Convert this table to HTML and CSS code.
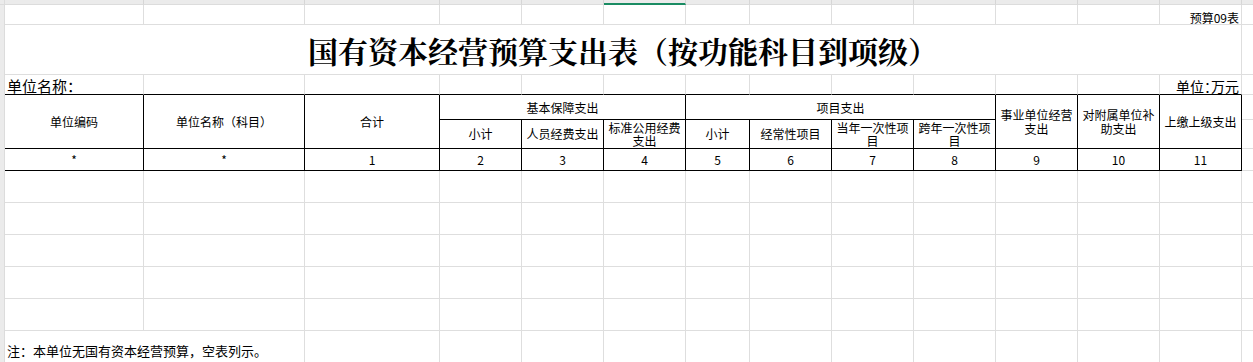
FILE: index.html
```html
<!DOCTYPE html>
<html lang="zh-CN">
<head>
<meta charset="utf-8">
<title>国有资本经营预算支出表</title>
<link rel="stylesheet" href="styles.css">
</head>
<body>
<div class="sheet">
  <div class="colhead">
    <div class="ch corner"></div>
    <div class="ch w139"></div>
    <div class="ch w161"></div>
    <div class="ch w135"></div>
    <div class="ch w82"></div>
    <div class="ch w82"></div>
    <div class="ch w82 selected"></div>
    <div class="ch w64"></div>
    <div class="ch w82"></div>
    <div class="ch w82"></div>
    <div class="ch w82"></div>
    <div class="ch w82"></div>
    <div class="ch w82"></div>
    <div class="ch w82"></div>
    <div class="ch wrest"></div>
  </div>
  <div class="main">
    <div class="rowhead"></div>
    <table class="grid">
      <colgroup>
        <col class="w139"><col class="w161"><col class="w135">
        <col class="w82"><col class="w82"><col class="w82">
        <col class="w64"><col class="w82"><col class="w82"><col class="w82">
        <col class="w82"><col class="w82"><col class="w82">
        <col class="wrest">
      </colgroup>
      <tr class="r20">
        <td></td><td></td><td></td><td></td><td></td><td></td><td></td>
        <td></td><td></td><td></td><td></td><td></td>
        <td class="tabno">预算09表</td>
        <td></td>
      </tr>
      <tr class="r50">
        <td class="title" colspan="13">国有资本经营预算支出表（按功能科目到项级）</td>
        <td></td>
      </tr>
      <tr class="r20 above-head">
        <td class="unitname">单位名称：</td>
        <td></td><td></td><td></td><td></td><td></td><td></td>
        <td></td><td></td><td></td><td></td><td></td>
        <td class="unit">单位：万元</td>
        <td class="plain"></td>
      </tr>
      <tr class="r25 head">
        <td class="hc" rowspan="2">单位编码</td>
        <td class="hc" rowspan="2">单位名称（科目）</td>
        <td class="hc" rowspan="2">合计</td>
        <td class="hc group" colspan="3">基本保障支出</td>
        <td class="hc group" colspan="4">项目支出</td>
        <td class="hc wrap" rowspan="2">事业单位经营支出</td>
        <td class="hc wrap" rowspan="2">对附属单位补助支出</td>
        <td class="hc" rowspan="2">上缴上级支出</td>
        <td class="plain"></td>
      </tr>
      <tr class="r29 head">
        <td class="hc">小计</td>
        <td class="hc">人员经费支出</td>
        <td class="hc wrap tight">标准公用经费支出</td>
        <td class="hc">小计</td>
        <td class="hc">经常性项目</td>
        <td class="hc wrap tight">当年一次性项目</td>
        <td class="hc wrap tight">跨年一次性项目</td>
        <td class="plain"></td>
      </tr>
      <tr class="r22 head">
        <td class="hc num">*</td>
        <td class="hc num">*</td>
        <td class="hc num">1</td>
        <td class="hc num">2</td>
        <td class="hc num">3</td>
        <td class="hc num">4</td>
        <td class="hc num">5</td>
        <td class="hc num">6</td>
        <td class="hc num">7</td>
        <td class="hc num">8</td>
        <td class="hc num">9</td>
        <td class="hc num">10</td>
        <td class="hc num">11</td>
        <td class="plain"></td>
      </tr>
      <tr class="r32">
        <td></td><td></td><td></td><td></td><td></td><td></td><td></td>
        <td></td><td></td><td></td><td></td><td></td><td></td><td></td>
      </tr>
      <tr class="r32">
        <td></td><td></td><td></td><td></td><td></td><td></td><td></td>
        <td></td><td></td><td></td><td></td><td></td><td></td><td></td>
      </tr>
      <tr class="r32">
        <td></td><td></td><td></td><td></td><td></td><td></td><td></td>
        <td></td><td></td><td></td><td></td><td></td><td></td><td></td>
      </tr>
      <tr class="r32">
        <td></td><td></td><td></td><td></td><td></td><td></td><td></td>
        <td></td><td></td><td></td><td></td><td></td><td></td><td></td>
      </tr>
      <tr class="r32">
        <td></td><td></td><td></td><td></td><td></td><td></td><td></td>
        <td></td><td></td><td></td><td></td><td></td><td></td><td></td>
      </tr>
      <tr class="r32">
        <td class="note" colspan="2">注：本单位无国有资本经营预算，空表列示。</td>
        <td></td><td></td><td></td><td></td><td></td><td></td><td></td>
        <td></td><td></td><td></td><td></td><td></td>
      </tr>
    </table>
  </div>
</div>
</body>
</html>
```

FILE: styles.css
```css
html, body {
  margin: 0;
  padding: 0;
  background: #ffffff;
}

body {
  width: 1253px;
  height: 362px;
  overflow: hidden;
  font-family: "Noto Sans CJK SC", "Noto Sans", sans-serif;
  color: #000000;
}

.sheet {
  display: flex;
  flex-direction: column;
  width: 1253px;
}

/* column header strip (cut off at top) */
.colhead {
  display: flex;
  height: 5px;
  background: #ebebeb;
}

.ch {
  flex: none;
  box-sizing: border-box;
  height: 5px;
  border-right: 1px solid #d6d6d6;
  border-bottom: 1px solid #dcdcdc;
}

.ch.corner {
  width: 5px;
  border-right: 1px solid #dcdcdc;
}

.ch.selected {
  border-bottom: 2px solid #1a8c63;
}

.ch.wrest {
  flex: 1 1 auto;
  border-right: none;
}

.w139 { width: 139px; }
.w161 { width: 161px; }
.w135 { width: 135px; }
.w82 { width: 82px; }
.w64 { width: 64px; }
.wrest { width: 40px; }

.main {
  display: flex;
  align-items: stretch;
}

.rowhead {
  flex: none;
  box-sizing: border-box;
  width: 5px;
  background: #ebebeb;
  border-right: 1px solid #dcdcdc;
}

.grid {
  flex: none;
  table-layout: fixed;
  border-collapse: separate;
  border-spacing: 0;
  width: 1277px;
}

.grid td {
  box-sizing: border-box;
  padding: 0 2px;
  border-right: 1px solid #dedede;
  border-bottom: 1px solid #dedede;
  white-space: normal;
  font-size: 12px;
  line-height: 14px;
}

.r20 { height: 20px; }
.r50 { height: 50px; }
.r25 { height: 25px; }
.r29 { height: 29px; }
.r22 { height: 22px; }
.r32 { height: 32px; }

.grid td.tabno {
  text-align: right;
  vertical-align: bottom;
  padding-right: 2px;
  font-size: 12px;
  line-height: 13px;
}

.grid td.title {
  text-align: center;
  vertical-align: middle;
  padding: 0;
  font-family: "Noto Serif CJK SC", "Noto Sans CJK SC", serif;
  font-size: 30px;
  font-weight: 700;
  line-height: 36px;
  white-space: nowrap;
}

.above-head td {
  border-bottom-color: #000000;
}

.grid .above-head td.plain {
  border-bottom-color: #dedede;
}

.grid td.unitname {
  vertical-align: bottom;
  text-align: left;
  font-size: 15px;
  line-height: 17px;
  padding-left: 2px;
  white-space: nowrap;
}

.grid td.unit {
  vertical-align: bottom;
  text-align: right;
  font-size: 14px;
  line-height: 16px;
  padding-right: 2px;
  white-space: nowrap;
  font-feature-settings: "palt";
}

.grid td.hc {
  text-align: center;
  vertical-align: middle;
  border-right-color: #000000;
  border-bottom-color: #000000;
  padding: 0 2px;
  font-size: 12px;
  line-height: 14px;
}

.grid td.tight {
  line-height: 13px;
}

.grid td.group {
  padding-top: 2px;
}

.grid td.note {
  vertical-align: bottom;
  text-align: left;
  font-size: 13px;
  line-height: 15px;
  padding-left: 2px;
  padding-bottom: 4px;
  white-space: nowrap;
}
```
